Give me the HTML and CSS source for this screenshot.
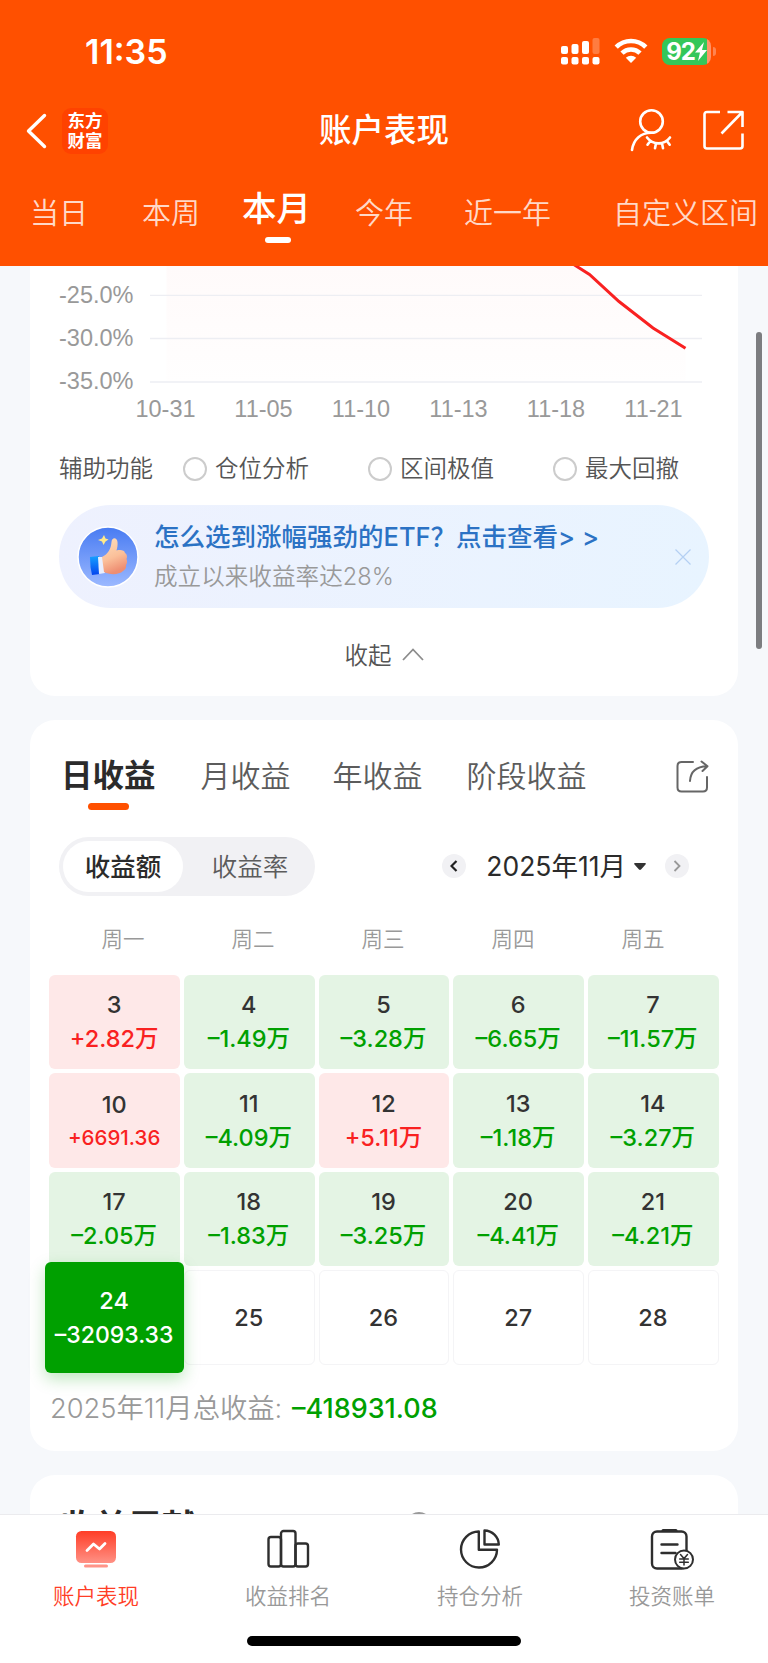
FILE: index.html
```html
<!DOCTYPE html>
<html lang="zh-CN">
<head>
    <meta charset="UTF-8">
    <meta name="viewport" content="width=device-width, initial-scale=1.0">
    <title>账户表现</title>
    <link rel="stylesheet" href="styles.css">
</head>
<body>

    <header class="header">
        <div class="status-row">
            <span class="time">11:35</span>
            <svg class="signal" width="40" height="28" viewBox="0 0 40 28" fill="#fff">
                <rect x="1" y="9" width="7" height="8" rx="2"/>
                <rect x="11.500" y="7" width="7" height="10" rx="2"/>
                <rect x="22" y="4" width="7" height="13" rx="2"/>
                <rect x="32.500" y="1" width="7" height="16" rx="2" opacity=".25"/>
                <rect x="1" y="20" width="7" height="7.500" rx="2"/>
                <rect x="11.500" y="20" width="7" height="7.500" rx="2"/>
                <rect x="22" y="20" width="7" height="7.500" rx="2"/>
                <rect x="32.500" y="20" width="7" height="7.500" rx="2"/>
            </svg>
            <svg class="wifi" width="34" height="26" viewBox="0 0 34 26" fill="none" stroke="#fff" stroke-width="4.600">
                <path d="M2.200 9.200C10.500 1 23.500 1 31.800 9.200"/>
                <path d="M8 15.200C13 10.300 21 10.300 26 15.200"/>
                <path d="M17 25l-5.200-5.200c3-2.700 7.400-2.700 10.400 0z" fill="#fff" stroke="none"/>
            </svg>
            <div class="battery">
                <span>92</span>
                <svg width="12" height="19" viewBox="0 0 12 19" fill="#fff"><path d="M9 0L0 10.500h5L3 19l9-11H7z"/></svg>
                <i class="battery-cap"></i>
            </div>
        </div>

        <div class="nav-row">
            <svg class="back" width="22" height="36" viewBox="0 0 22 36" fill="none" stroke="#fff" stroke-width="3.400" stroke-linecap="round" stroke-linejoin="round"><path d="M18.500 2.500L2.500 18l16 15.500"/></svg>
            <div class="logo"><span>东方</span><span>财富</span></div>
            <h1 class="title">账户表现</h1>
            <svg class="user" width="42" height="44" viewBox="0 0 42 44" fill="none" stroke="#fff" stroke-width="2.600" stroke-linecap="round">
                <circle cx="21.500" cy="13.500" r="11.300"/>
                <path d="M2 42C3.500 31 11 24.500 22 24.800"/>
                <path d="M17 29.500c6 7.800 17 7.800 23 0M20.500 32.700l-3 4M26 35.200l-1 5M32 35.200l1 5M36.700 32.700l3 4"/>
            </svg>
            <svg class="export" width="41" height="41" viewBox="0 0 41 41" fill="none" stroke="#fff" stroke-width="2.600" stroke-linejoin="round">
                <path d="M17 2H4Q1.500 2 1.500 4.500V36q0 2.500 2.500 2.500h33q2.500 0 2.500-2.500V23.500M24.500 2h15v15M39 2.500L18.500 23.500"/>
            </svg>
        </div>

        <nav class="period">
            <a class="p-day">当日</a>
            <a class="p-week">本周</a>
            <a class="p-month active">本月</a>
            <a class="p-year">今年</a>
            <a class="p-last">近一年</a>
            <a class="p-custom">自定义区间</a>
        </nav>
    </header>

    <main class="content">
        <section class="card chart-card">
            <svg class="chart" width="708" height="164" viewBox="30 266 708 164">
                <defs>
                    <linearGradient id="area" x1="0" y1="0" x2="0" y2="1">
                        <stop offset="0" stop-color="#fffafa"/>
                        <stop offset="1" stop-color="#fffefe"/>
                    </linearGradient>
                </defs>
                <path d="M166.500 266H576l14 9 29 27 34 26 32.500 20.500v33.500h-519z" fill="url(#area)"/>
                <path d="M150 295.300H702M150 338.500H702M150 382H702" stroke="#edeef3" stroke-width="1.300"/>
                <path d="M573 264l16.500 10.500 29.500 27 34 26.500 32.500 20.300" fill="none" stroke="#f92121" stroke-width="3"/>
                <g class="axis">
                    <text x="59" y="303">-25.0%</text>
                    <text x="59" y="346">-30.0%</text>
                    <text x="59" y="389">-35.0%</text>
                    <g text-anchor="middle">
                        <text x="165.500" y="417">10-31</text>
                        <text x="263.500" y="417">11-05</text>
                        <text x="361" y="417">11-10</text>
                        <text x="458.500" y="417">11-13</text>
                        <text x="556" y="417">11-18</text>
                        <text x="653.500" y="417">11-21</text>
                    </g>
                </g>
            </svg>

            <div class="options">
                <span class="options-label">辅助功能</span>
                <label class="option"><i></i>仓位分析</label>
                <label class="option"><i></i>区间极值</label>
                <label class="option"><i></i>最大回撤</label>
            </div>

            <div class="banner">
                <svg class="thumb" width="62" height="62" viewBox="0 0 62 62">
                    <defs>
                        <linearGradient id="disc" x1="0" y1="0" x2="0" y2="1">
                            <stop offset="0" stop-color="#487bf2"/>
                            <stop offset="1" stop-color="#9cb9ff"/>
                        </linearGradient>
                        <linearGradient id="skin" x1="0" y1="0" x2="0.300" y2="1">
                            <stop offset="0" stop-color="#ffe0bd"/>
                            <stop offset="0.600" stop-color="#fbc09a"/>
                            <stop offset="1" stop-color="#ee8e72"/>
                        </linearGradient>
                        <linearGradient id="cuff" x1="0" y1="0" x2="0" y2="1">
                            <stop offset="0" stop-color="#16a0ff"/>
                            <stop offset="1" stop-color="#0545ee"/>
                        </linearGradient>
                    </defs>
                    <circle cx="31" cy="31" r="30" fill="url(#disc)" stroke="#fff" stroke-width="1.500"/>
                    <path d="M13 31l9-1 1 18-8 1q-2-8-2-18z" fill="url(#cuff)"/>
                    <path d="M21 31h5l2 16-6 1z" fill="#e8efff"/>
                    <path d="M25 31c6-3 9-8 9.500-15 .3-5 5.500-5 6 0 .3 3-.2 6-1 8.500 4-1 8-.5 8.500 2.500 2 1 2.500 4 1.500 6 1 2 .5 5-.5 6 .5 3-1 5-3 6-4 4-13 4-19 1z" fill="url(#skin)"/>
                    <path d="M27 9l1.500 3.500 3 1-3 2L26.500 19 25 15.500 21 14l4-1.500z" fill="#ffe98a"/>
                </svg>
                <div class="banner-text">
                    <p class="banner-title">怎么选到涨幅强劲的ETF？<span>点击查看&gt; &gt;</span></p>
                    <p class="banner-sub">成立以来收益率达28%</p>
                </div>
                <svg class="close" width="16" height="16" viewBox="0 0 16 16" stroke="#b4d0f3" stroke-width="1.200"><path d="M.5.500l15 15M15.500.500l-15 15"/></svg>
            </div>

            <div class="collapse">
                收起
                <svg width="22" height="13" viewBox="0 0 22 13" fill="none" stroke="#8c8c8c" stroke-width="1.800"><path d="M1 12L11 1.500 21 12"/></svg>
            </div>
        </section>

        <section class="card income-card">
            <div class="income-tabs">
                <a class="t-day active">日收益</a>
                <a class="t-month">月收益</a>
                <a class="t-year">年收益</a>
                <a class="t-stage">阶段收益</a>
                <svg class="share" width="33" height="33" viewBox="0 0 33 33" fill="none" stroke="#666" stroke-width="2" stroke-linecap="round" stroke-linejoin="round">
                    <path d="M17 2H5.500Q1.500 2 1.500 6v21.500q0 4 4 4H27q4 0 4-4V17"/>
                    <path d="M14 21C14.500 12 20 6.500 31 6.200M25.500 1.500L31.500 6.200 26.500 11"/>
                </svg>
            </div>

            <div class="toolbar">
                <div class="segment">
                    <span class="on">收益额</span>
                    <span>收益率</span>
                </div>
                <div class="month">
                    <i class="arrow"><svg width="8" height="12" viewBox="0 0 8 12" fill="none" stroke="#222" stroke-width="2.200"><path d="M6.500 1L1.500 6l5 5"/></svg></i>
                    <span class="month-name">2025年11月</span>
                    <svg class="drop" width="12" height="7" viewBox="0 0 12 7" fill="#333"><path d="M1 0h10q1.500.5.500 1.500L7 6.500q-1 .8-2 0L.5 1.500Q-.5.500 1 0z"/></svg>
                    <i class="arrow"><svg width="8" height="12" viewBox="0 0 8 12" fill="none" stroke="#999" stroke-width="1.800"><path d="M1.500 1l5 5-5 5"/></svg></i>
                </div>
            </div>

            <div class="weekdays">
                <span>周一</span><span>周二</span><span>周三</span><span>周四</span><span>周五</span>
            </div>

            <div class="calendar">
                <div class="day up"><b>3</b><em>+2.82万</em></div>
                <div class="day down"><b>4</b><em>–1.49万</em></div>
                <div class="day down"><b>5</b><em>–3.28万</em></div>
                <div class="day down"><b>6</b><em>–6.65万</em></div>
                <div class="day down"><b>7</b><em>–11.57万</em></div>

                <div class="day up small"><b>10</b><em>+6691.36</em></div>
                <div class="day down"><b>11</b><em>–4.09万</em></div>
                <div class="day up"><b>12</b><em>+5.11万</em></div>
                <div class="day down"><b>13</b><em>–1.18万</em></div>
                <div class="day down"><b>14</b><em>–3.27万</em></div>

                <div class="day down"><b>17</b><em>–2.05万</em></div>
                <div class="day down"><b>18</b><em>–1.83万</em></div>
                <div class="day down"><b>19</b><em>–3.25万</em></div>
                <div class="day down"><b>20</b><em>–4.41万</em></div>
                <div class="day down"><b>21</b><em>–4.21万</em></div>

                <div class="day today"><b>24</b><em>–32093.33</em></div>
                <div class="day empty"><b>25</b></div>
                <div class="day empty"><b>26</b></div>
                <div class="day empty"><b>27</b></div>
                <div class="day empty"><b>28</b></div>
            </div>

            <p class="total">2025年11月总收益: <span>–418931.08</span></p>
        </section>

        <section class="card next-card">
            <h2>收益贡献</h2>
            <i class="info"></i>
        </section>
    </main>

    <footer class="tabbar">
        <div class="tabs">
            <a class="tab active">
                <svg width="44" height="42" viewBox="0 0 44 42">
                    <defs>
                        <linearGradient id="screen" x1="0" y1="0" x2="0" y2="1">
                            <stop offset="0" stop-color="#ff3d26"/>
                            <stop offset="1" stop-color="#ff9185"/>
                        </linearGradient>
                    </defs>
                    <rect x="2" y="2" width="40" height="32" rx="5.500" fill="url(#screen)"/>
                    <rect x="10" y="35.500" width="24" height="3" rx="1.500" fill="#ff9488"/>
                    <path d="M13 21.500l6.500-6.500 6 5L31 14.500" fill="none" stroke="#fff" stroke-width="2.800" stroke-linecap="round" stroke-linejoin="round"/>
                </svg>
                账户表现
            </a>
            <a class="tab">
                <svg width="44" height="42" viewBox="0 0 44 42" fill="none" stroke="#2e2e2e" stroke-width="2.400">
                    <rect x="2.500" y="8" width="12.500" height="29.500" rx="2.500"/>
                    <rect x="15" y="2" width="14.500" height="35.500" rx="2.500"/>
                    <rect x="29.500" y="14.500" width="12.500" height="23" rx="2.500"/>
                </svg>
                收益排名
            </a>
            <a class="tab">
                <svg width="44" height="42" viewBox="0 0 44 42" fill="none" stroke="#2e2e2e" stroke-width="2.400" stroke-linejoin="round">
                    <path d="M20.800 2.500V20.700H39A18 18 0 1 1 20.800 2.500z"/>
                    <path d="M26.500 1.500V15.500H40.800A14.500 14.500 0 0 0 26.500 1.500z"/>
                </svg>
                持仓分析
            </a>
            <a class="tab">
                <svg width="44" height="42" viewBox="0 0 44 42" fill="none" stroke="#2e2e2e" stroke-width="2.400" stroke-linecap="round">
                    <rect x="2" y="2.500" width="34.500" height="37" rx="5"/>
                    <path d="M13 1.500h13" stroke-width="3"/>
                    <path d="M11.500 15.500h16M11.500 24h14"/>
                    <circle cx="34" cy="30.500" r="9" fill="#fff" stroke-width="2"/>
                    <path d="M30.500 25.500l3.500 4 3.500-4M34 29.500v6.500M29.700 30h8.600M29.700 33.200h8.600" stroke-width="1.500"/>
                </svg>
                投资账单
            </a>
        </div>
        <i class="home-indicator"></i>
    </footer>

    <i class="scrollbar"></i>

</body>
</html>
```

FILE: styles.css
```css
* {
    box-sizing: border-box;
    margin: 0;
    padding: 0;
}
body {
    width: 768px;
    height: 1663px;
    display: flex;
    flex-direction: column;
    overflow: hidden;
    position: relative;
    background-color: #f6f8fb;
    font-family: Inter, "Noto Sans CJK SC", sans-serif;
    color: #333;
}
i, em {
    font-style: normal;
}
svg {
    display: block;
    flex: none;
}

/* Header */
.header {
    height: 266px;
    flex: none;
    background-color: #ff5000;
    color: #fff;
}
.status-row {
    height: 102px;
    padding: 0 57px 0 85px;
    display: flex;
    align-items: center;
}
.time {
    font-size: 34px;
    font-weight: 600;
    line-height: 40px;
    margin-right: auto;
    padding-top: 1px;
}
.signal {
    margin-right: 14px;
}
.wifi {
    margin-right: 14px;
}
.battery {
    width: 49px;
    height: 27px;
    border-radius: 8px;
    background: linear-gradient(to right, #34c759 45px, #ff9468 45px);
    display: flex;
    align-items: center;
    justify-content: center;
    font-size: 24px;
    font-weight: 700;
    letter-spacing: -1px;
    line-height: 27px;
    position: relative;
}
.battery-cap {
    position: absolute;
    right: -5px;
    top: 9px;
    width: 3px;
    height: 9px;
    border-radius: 0 4px 4px 0;
    background-color: #ff8450;
}
.nav-row {
    height: 58px;
    padding: 0 24px 0 27px;
    display: flex;
    align-items: center;
}
.back {
    margin-left: -1px;
}
.logo {
    width: 46px;
    height: 46px;
    margin-left: 14px;
    border-radius: 9px;
    background-color: #ff4200;
    font-family: "Noto Sans CJK SC", sans-serif;
    font-size: 17.5px;
    font-weight: 700;
    line-height: 19.5px;
    padding-top: 2px;
    text-align: center;
}
.logo span {
    display: block;
}
.title {
    flex: 1;
    padding-left: 30px;
    text-align: center;
    font-size: 32.5px;
    font-weight: 500;
    line-height: 44px;
}
.user {
    margin-right: 31px;
}
.nav-row .user, .nav-row .export {
    margin-top: -2px;
}
.period {
    height: 106px;
    padding-top: 2px;
    display: flex;
    align-items: center;
    font-size: 29px;
    font-weight: 350;
    line-height: 40px;
    white-space: nowrap;
    color: rgba(255, 255, 255, .8);
}
.p-day {
    margin-left: 30px;
}
.p-week {
    margin-left: 54px;
}
.p-month {
    margin-left: 42px;
}
.p-year {
    margin-left: 44px;
}
.p-last {
    margin-left: 51px;
}
.p-custom {
    margin-left: 62px;
}
.period .active {
    font-size: 34.5px;
    font-weight: 500;
    color: #fff;
    margin-top: -10px;
    position: relative;
}
.period .active::after {
    content: "";
    position: absolute;
    left: 23px;
    bottom: -14px;
    width: 26px;
    height: 6px;
    border-radius: 3px;
    background-color: #fff;
}

/* Cards */
.content {
    flex: 1;
    min-height: 0;
    overflow: hidden;
    padding: 0 30px;
}
.card {
    background-color: #fff;
    border-radius: 25px;
    margin-bottom: 24px;
}
.chart-card {
    height: 430px;
    border-top-left-radius: 0;
    border-top-right-radius: 0;
}
.axis {
    font-family: "Liberation Sans", Arial, sans-serif;
    font-size: 23.5px;
    fill: #999;
}
.options {
    height: 78px;
    padding-left: 29px;
    display: flex;
    align-items: center;
    font-size: 23.5px;
    line-height: 34px;
    font-weight: 350;
    color: #555;
}
.option {
    display: flex;
    align-items: center;
    margin-left: 30px;
    width: 155px;
    white-space: nowrap;
}
.option i {
    width: 24px;
    height: 24px;
    flex: none;
    border: 2px solid #ccc;
    border-radius: 50%;
    margin-right: 8px;
}
.banner {
    margin: -3px 29px 0;
    height: 103px;
    padding: 0 18px 0 18px;
    border-radius: 52px;
    background: linear-gradient(100deg, #eef1fe, #e8f4ff);
    display: flex;
    align-items: center;
}
.banner-text {
    flex: 1;
    margin-left: 15px;
}
.banner-title {
    font-size: 25.5px;
    font-weight: 500;
    line-height: 40px;
    color: #2b72c4;
    white-space: nowrap;
}
.banner-sub {
    font-size: 23.6px;
    font-weight: 350;
    line-height: 40px;
    color: #999;
}
.collapse {
    display: flex;
    align-items: center;
    justify-content: center;
    height: 88px;
    padding-top: 4px;
    gap: 10px;
    font-size: 23.5px;
    font-weight: 350;
    color: #555;
}

/* Daily income */
.income-card {
    height: 731px;
}
.income-tabs {
    height: 113px;
    padding: 0 29px 1px 31px;
    display: flex;
    align-items: center;
    font-size: 30px;
    font-weight: 350;
    line-height: 44px;
    color: #5c5c5c;
}
.income-tabs .active {
    font-size: 31.5px;
    font-weight: 700;
    color: #2b2b2b;
    position: relative;
}
.income-tabs .active::after {
    content: "";
    position: absolute;
    left: 27px;
    bottom: -12px;
    width: 41px;
    height: 7px;
    border-radius: 4px;
    background-color: #ff5000;
}
.t-month {
    margin-left: 45px;
}
.t-year {
    margin-left: 42px;
}
.t-stage {
    margin-left: 44px;
}
.share {
    margin-left: auto;
}
.toolbar {
    display: flex;
    align-items: center;
    justify-content: space-between;
    height: 66px;
    padding: 0 49px 0 29px;
}
.segment {
    width: 256px;
    height: 59px;
    padding: 4px;
    border-radius: 30px;
    background-color: #f1f1f4;
    display: flex;
    font-size: 25.5px;
    font-weight: 350;
    line-height: 51px;
    text-align: center;
    color: #5c5c5c;
}
.segment span {
    flex: 1;
    padding-left: 6px;
}
.segment .on {
    flex: none;
    width: 120px;
    padding: 0;
    border-radius: 26px;
    background-color: #fff;
    font-weight: 500;
    color: #2b2b2b;
}
.month {
    display: flex;
    align-items: center;
}
.arrow {
    width: 24px;
    height: 24px;
    border-radius: 50%;
    background-color: #f1f1f4;
    display: flex;
    align-items: center;
    justify-content: center;
}
.month-name {
    margin-left: 20px;
    font-size: 26.5px;
    font-weight: 400;
    line-height: 36px;
    color: #2b2b2b;
}
.drop {
    margin: 0 19px 0 8px;
}
.weekdays {
    display: flex;
    padding: 0 30px 0 28px;
    height: 75.5px;
    line-height: 80px;
    font-size: 21.5px;
    font-weight: 350;
    color: #999;
}
.weekdays span {
    flex: 1;
    text-align: center;
}
.calendar {
    display: grid;
    grid-template-columns: repeat(5, 1fr);
    grid-auto-rows: 94.5px;
    gap: 4px;
    padding: 0 19.3px;
}
.day {
    border-radius: 6px;
    display: flex;
    flex-direction: column;
    align-items: center;
    justify-content: center;
    padding: 1px 1px 0 0;
    font-size: 23.5px;
    line-height: 34px;
    white-space: nowrap;
}
.day b {
    font-weight: 500;
}
.day em {
    font-weight: 500;
}
.day.up {
    background-color: #fee8e8;
}
.day.up em {
    color: #f92121;
}
.day.down {
    background-color: #e4f4e4;
}
.day.down em {
    color: #00a000;
}
.day.small em {
    font-size: 20.5px;
    line-height: 31px;
}
.day.empty {
    border: 1px solid #f4f4f6;
}
.day.today {
    margin: -8px -4.5px;
    background-color: #00a000;
    color: #fff;
    box-shadow: 0 6px 16px rgba(0, 160, 0, .25);
    position: relative;
}
.day.today em {
    font-size: 23px;
}
.total {
    padding: 23px 0 0 20px;
    font-size: 27.3px;
    font-weight: 350;
    line-height: 42px;
    color: #999;
}
.total span {
    margin-left: 2px;
    font-size: 27px;
    font-weight: 500;
    color: #00a000;
}
.next-card {
    height: 200px;
    padding: 28px 30px 0;
    display: flex;
}
.next-card h2 {
    font-size: 34px;
    font-weight: 700;
    line-height: 48px;
    color: #2b2b2b;
}
.info {
    width: 26px;
    height: 26px;
    margin: 9px 0 0 210px;
    border: 2px solid #999;
    border-radius: 50%;
}

/* Bottom tabs */
.tabbar {
    height: 149px;
    flex: none;
    background-color: #fff;
    border-top: 1px solid #ebebee;
    position: relative;
}
.tabs {
    display: flex;
}
.tab {
    flex: 1;
    display: flex;
    flex-direction: column;
    align-items: center;
    padding-top: 14px;
    font-size: 21.5px;
    font-weight: 350;
    line-height: 32px;
    color: #999;
}
.tab svg {
    margin-bottom: 9px;
}
.tab.active {
    color: #ff3d26;
}
.home-indicator {
    display: block;
    width: 274px;
    height: 10px;
    margin: 24px auto 0;
    border-radius: 5px;
    background-color: #000;
}

/* Scroll position marker over the page */
.scrollbar {
    position: absolute;
    left: 756px;
    top: 332px;
    width: 6px;
    height: 317px;
    border-radius: 3px;
    background-color: #7c7d80;
}
```
